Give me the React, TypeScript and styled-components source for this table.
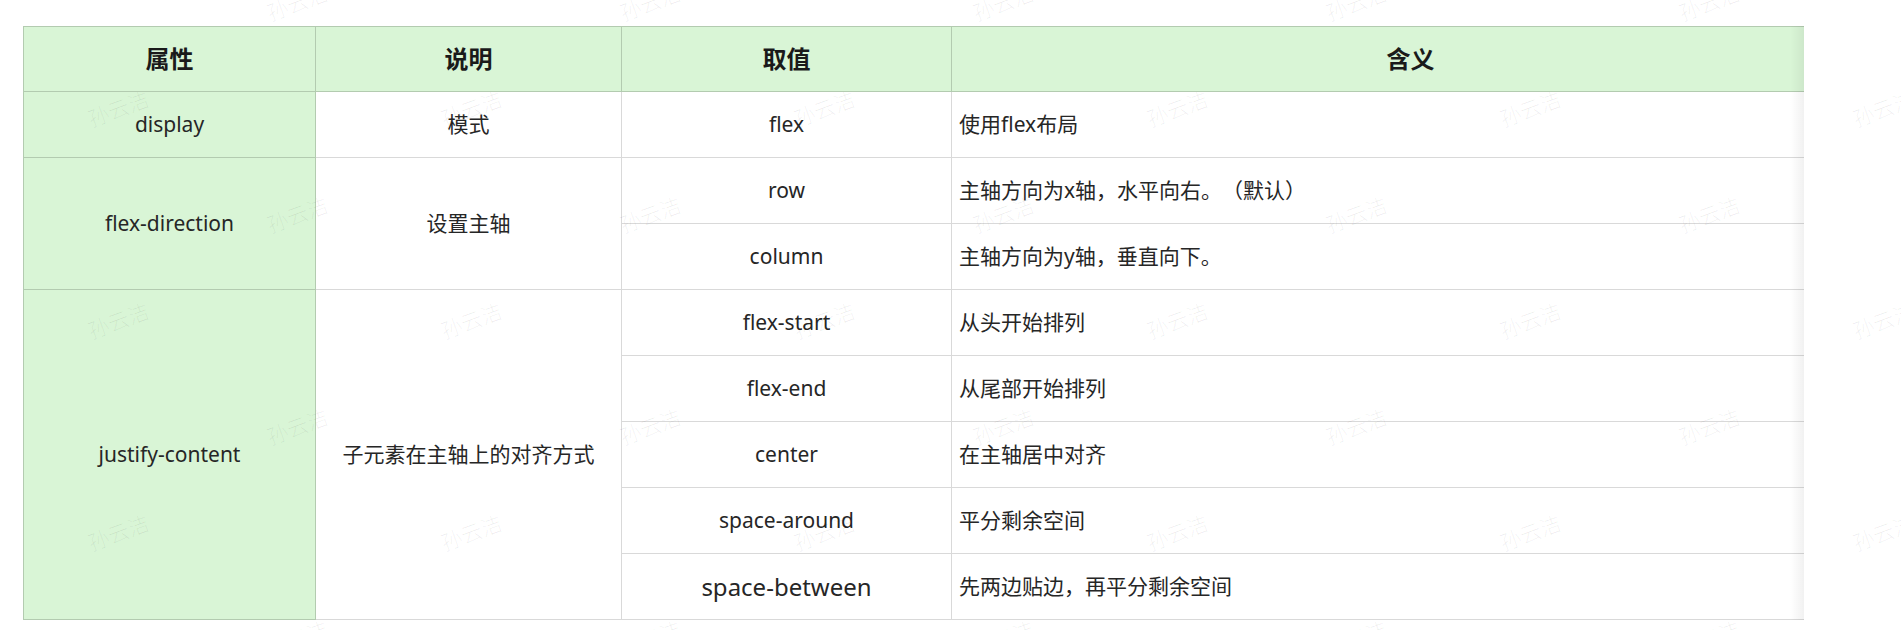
import React from "react";
import styled, { createGlobalStyle, css } from "styled-components";

const GlobalStyle = createGlobalStyle`
  html, body {
    margin: 0;
    padding: 0;
    background: #ffffff;
  }
  body {
    font-family: "Noto Sans", "Noto Sans CJK SC", sans-serif;
    color: #262626;
    text-spacing-trim: space-all;
  }
`;

const GREEN = "#d9f5d6";
const GREEN_LINE = "#b3cbb0";
const GRAY_LINE = "#d9d9d9";

const Page = styled.div`
  position: relative;
  width: 1901px;
  height: 630px;
  overflow: hidden;
  box-sizing: border-box;
  padding: 26px 0 0 23px;
`;

const Scroller = styled.div`
  position: relative;
  width: 1781px;
  overflow: hidden;
`;

const ScrollShadow = styled.div`
  position: absolute;
  top: 0;
  right: 0;
  bottom: 0;
  width: 14px;
  background: linear-gradient(to right, rgba(0, 0, 0, 0), rgba(0, 0, 0, 0.055));
  pointer-events: none;
`;

const Grid = styled.div`
  display: grid;
  grid-template-columns: 293px 306px 330px 918px;
  grid-template-rows: 66px repeat(8, 66px);
  width: max-content;
`;

type CellProps = {
  $kind: "head" | "key" | "body";
  $align?: "center" | "left";
  $row?: string;
  $col?: string;
  $big?: boolean;
  $first?: boolean;
};

const Cell = styled.div<CellProps>`
  box-sizing: border-box;
  display: flex;
  align-items: center;
  justify-content: ${(p) => (p.$align === "left" ? "flex-start" : "center")};
  padding: ${(p) => (p.$align === "left" ? "0 8px 0 7px" : "0 8px")};
  font-size: ${(p) => (p.$big ? "24px" : "21px")};
  line-height: 1.4;
  white-space: nowrap;
  grid-row: ${(p) => p.$row ?? "auto"};
  grid-column: ${(p) => p.$col ?? "auto"};
  border-right: 1px solid ${GRAY_LINE};
  border-bottom: 1px solid ${GRAY_LINE};
  background: #ffffff;
  color: #262626;
  ${(p) =>
    p.$kind === "head" &&
    css`
      background: ${GREEN};
      border-top: 1px solid ${GREEN_LINE};
      border-right-color: ${GREEN_LINE};
      border-bottom-color: ${GREEN_LINE};
      font-size: 24px;
      font-weight: 700;
      color: #1a1a1a;
    `}
  ${(p) =>
    p.$kind === "key" &&
    css`
      background: ${GREEN};
      border-right-color: ${GREEN_LINE};
      border-bottom-color: ${GREEN_LINE};
    `}
  ${(p) =>
    p.$first &&
    css`
      border-left: 1px solid ${GREEN_LINE};
    `}
`;

const HeadRow = styled.div`
  display: contents;
`;

const WatermarkLayer = styled.div`
  position: absolute;
  inset: 0;
  pointer-events: none;
`;

const Mark = styled.span`
  position: absolute;
  transform: translate(-50%, -50%) rotate(-20deg);
  font-family: "Noto Sans CJK SC", sans-serif;
  font-size: 21px;
  font-weight: 300;
  color: rgba(0, 0, 0, 0.065);
  white-space: nowrap;
  user-select: none;
`;

const marks: { x: number; y: number }[] = [];
for (let k = 0; k < 7; k++) {
  const y = 2 + k * 106;
  const x0 = k % 2 === 0 ? 297 : 118;
  for (let x = x0 - 353; x < 1990; x += 353) {
    marks.push({ x, y });
  }
}

const headers = ["属性", "说明", "取值", "含义"];

export default function App() {
  return (
    <>
      <GlobalStyle />
      <Page>
        <Scroller>
          <Grid>
            <HeadRow>
              {headers.map((h, i) => (
                <Cell key={h} $kind="head" $first={i === 0}>
                  {h}
                </Cell>
              ))}
            </HeadRow>

            <Cell $kind="key" $first>display</Cell>
            <Cell $kind="body">模式</Cell>
            <Cell $kind="body">flex</Cell>
            <Cell $kind="body" $align="left">使用flex布局</Cell>

            <Cell $kind="key" $first $row="3 / span 2" $col="1">flex-direction</Cell>
            <Cell $kind="body" $row="3 / span 2" $col="2">设置主轴</Cell>
            <Cell $kind="body" $row="3" $col="3">row</Cell>
            <Cell $kind="body" $align="left" $row="3" $col="4">主轴方向为x轴，水平向右。（默认）</Cell>
            <Cell $kind="body" $row="4" $col="3">column</Cell>
            <Cell $kind="body" $align="left" $row="4" $col="4">主轴方向为y轴，垂直向下。</Cell>

            <Cell $kind="key" $first $row="5 / span 5" $col="1">justify-content</Cell>
            <Cell $kind="body" $row="5 / span 5" $col="2">子元素在主轴上的对齐方式</Cell>
            <Cell $kind="body" $row="5" $col="3">flex-start</Cell>
            <Cell $kind="body" $align="left" $row="5" $col="4">从头开始排列</Cell>
            <Cell $kind="body" $row="6" $col="3">flex-end</Cell>
            <Cell $kind="body" $align="left" $row="6" $col="4">从尾部开始排列</Cell>
            <Cell $kind="body" $row="7" $col="3">center</Cell>
            <Cell $kind="body" $align="left" $row="7" $col="4">在主轴居中对齐</Cell>
            <Cell $kind="body" $row="8" $col="3">space-around</Cell>
            <Cell $kind="body" $align="left" $row="8" $col="4">平分剩余空间</Cell>
            <Cell $kind="body" $big $row="9" $col="3">space-between</Cell>
            <Cell $kind="body" $align="left" $row="9" $col="4">先两边贴边，再平分剩余空间</Cell>
          </Grid>
          <ScrollShadow />
        </Scroller>
        <WatermarkLayer>
          {marks.map((m, i) => (
            <Mark key={i} style={{ left: m.x, top: m.y }}>
              孙云洁
            </Mark>
          ))}
        </WatermarkLayer>
      </Page>
    </>
  );
}
